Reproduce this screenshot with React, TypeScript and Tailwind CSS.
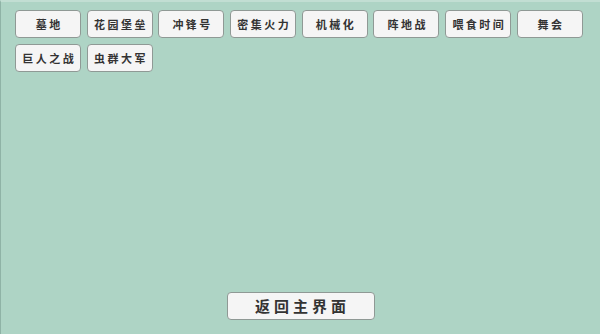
const levels = ["墓地", "花园堡垒", "冲锋号", "密集火力", "机械化", "阵地战", "喂食时间", "舞会", "巨人之战", "虫群大军"];

export default function App() {
  return (
    <div
      className="h-screen w-full bg-[#aed4c5] border-t-2 border-t-[#c2ded3] border-l border-l-[#8fb3a6] flex flex-col justify-between pb-[14px]"
      style={{ fontFamily: '"Noto Sans CJK SC", "Noto Sans", sans-serif' }}
    >
      <div className="flex flex-wrap gap-x-[5.7px] gap-y-[6px] pl-[14px] pt-[8px] pr-[10px]">
        {levels.map((name) => (
          <button
            key={name}
            className="w-[66px] h-[28px] bg-[#f5f5f5] border border-[#8f9995] rounded-[4px] text-[11px] font-bold text-[#333] tracking-[2.5px] flex items-center justify-center"
          >
            <span className="pl-[2.5px]">{name}</span>
          </button>
        ))}
      </div>
      <div className="flex justify-center">
        <button className="w-[148px] h-[28px] bg-[#f5f5f5] border border-[#8f9995] rounded-[4px] text-[15px] font-bold text-[#333] tracking-[4px] flex items-center justify-center">
          <span className="pl-[4px]">返回主界面</span>
        </button>
      </div>
    </div>
  );
}
